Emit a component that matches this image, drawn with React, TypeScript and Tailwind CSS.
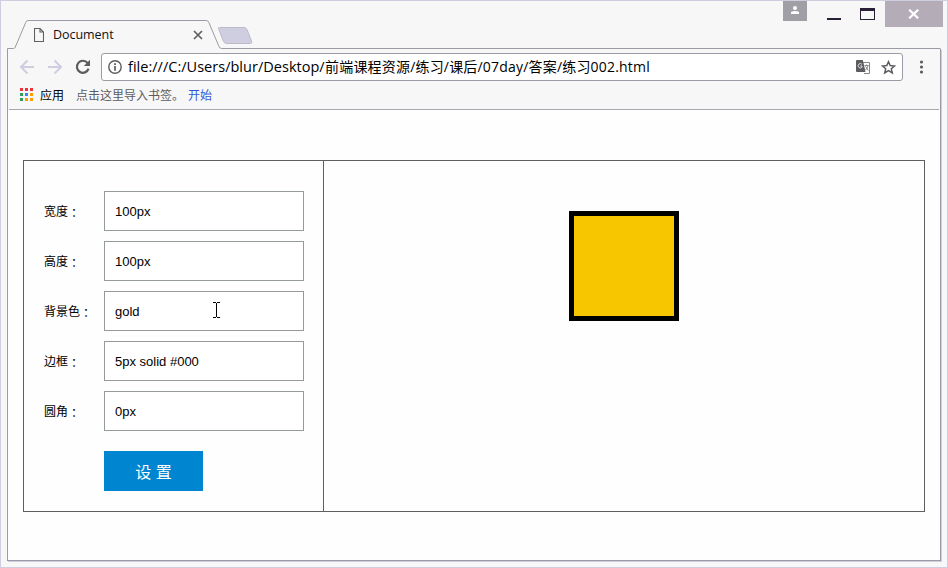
import React from 'react';

const ui = "font-['Open_Sans','Noto_Sans_CJK_SC',sans-serif]";

const fields = [
  { label: '宽度', value: '100px' },
  { label: '高度', value: '100px' },
  { label: '背景色', value: 'gold' },
  { label: '边框', value: '5px solid #000' },
  { label: '圆角', value: '0px' },
];

const appColors = [
  'bg-[#f0323c]', 'bg-[#f0323c]', 'bg-[#f0323c]',
  'bg-[#2f9e57]', 'bg-[#2e8cf0]', 'bg-[#ff9c00]',
  'bg-[#2f9e57]', 'bg-[#ff9c00]', 'bg-[#ff9c00]',
];

function TitleBar() {
  return (
    <div className="relative flex h-[49px] shrink-0">
      <svg className="absolute left-0 top-0" width="948" height="49" viewBox="0 0 948 49" fill="none">
        <path d="M218.500 28.500Q218 27.500 219.500 27.500H244Q246 27.500 247 29.500L251.500 41Q252.500 43.500 250.500 43.500H226.500Q224.500 43.500 223.500 41.500Z" fill="#cfcde0" stroke="#bdbbc8" />
        <path d="M7.500 49V48.500H13.500Q14.800 48.500 15.300 47L25.700 22.500Q26.500 20.500 28 20.500H206.500Q208 20.500 208.800 22.500L219 46.500Q219.800 48.500 221.500 48.500H940.500" stroke="#9c9ba3" />
      </svg>
      <div className="mt-[20px] flex h-[29px] w-[203px] items-center pl-[34px]">
        <svg className="shrink-0" width="10" height="14" viewBox="0 0 10 14" fill="none" stroke="#5f5f63" strokeWidth="1.100">
          <path d="M.5.5H6L9.500 4V13.500H.5ZM6 .5V4H9.500" />
        </svg>
        <span className="ml-[9px] mt-px text-[12.500px] leading-[18px] tracking-[-0.05px] text-[#111]">Document</span>
        <svg className="ml-auto shrink-0" width="10" height="10" viewBox="0 0 10 10" stroke="#5f5f63" strokeWidth="1.700">
          <path d="M1 1L9 9M9 1L1 9" />
        </svg>
      </div>
      <div className="ml-auto mr-[5px] flex h-[27px] items-start pt-px">
        <div className="flex h-5 w-6 justify-center bg-[#a09fa5] pt-[5px]">
          <svg width="8" height="8" viewBox="0 0 8 8" fill="#fff">
            <circle cx="4" cy="2" r="2" />
            <path d="M0 8V6.500Q0 5 4 5T8 6.500V8Z" />
          </svg>
        </div>
        <div className="ml-5 mt-[17px] h-[2px] w-[14px] bg-[#292036]" />
        <div className="ml-[19px] mt-[7px] h-3 w-[15px] border border-t-[3px] border-[#292036]" />
        <div className="ml-[10px] flex h-[26px] w-[58px] items-center justify-center bg-[#b4adb7]">
          <svg width="12" height="10" viewBox="0 0 12 10" stroke="#fff" strokeWidth="2.200">
            <path d="M1.200.7L10.200 9.300M10.200.7L1.200 9.300" />
          </svg>
        </div>
      </div>
    </div>
  );
}

function AddressBar() {
  return (
    <div className="flex h-[36px] items-center pl-[10px] pr-[12px]">
      <svg width="16" height="16" viewBox="0 0 16 16" fill="none" stroke="#cfcde0" strokeWidth="2">
        <path d="M15 8H2M8.500 1.500L2 8L8.500 14.500" />
      </svg>
      <svg className="ml-3" width="16" height="16" viewBox="0 0 16 16" fill="none" stroke="#cfcde0" strokeWidth="2">
        <path d="M1 8H14M7.500 1.500L14 8L7.500 14.500" />
      </svg>
      <svg className="ml-3" width="16" height="16" viewBox="0 0 16 16" fill="none">
        <path d="M12.600 4A6 6 0 1 0 13.600 9.700" stroke="#5c5c60" strokeWidth="2.200" />
        <path d="M15 .8V7H8.800Z" fill="#5c5c60" />
      </svg>
      <div className="ml-[10px] flex h-[28px] w-[802px] items-center rounded-[3px] border border-[#9c9ba3] bg-white pl-[6px] pr-[6px]">
        <svg className="shrink-0" width="14" height="14" viewBox="0 0 14 14" fill="none" stroke="#5c5c60">
          <circle cx="7" cy="7" r="6.200" strokeWidth="1.400" />
          <path d="M7 6V10.800M7 3.200V4.900" strokeWidth="1.700" />
        </svg>
        <div className="-mt-px ml-[6px] flex items-center whitespace-nowrap text-[14px] leading-[22px] text-black">
          <span className="w-[197px] text-[14.500px] tracking-[0.02px]">file:///C:/Users/blur/Desktop/</span>
          <span className="tracking-[0.19px]">前端课程资源/练习/课后/07day/答案/练习002.html</span>
        </div>
        <svg className="ml-auto shrink-0" width="14" height="14" viewBox="0 0 14 14" fill="none">
          <path d="M7 2.500H13.500V13.500H8" fill="#fff" stroke="#85858a" />
          <path d="M1 0H6.800L9.500 12H1Q0 12 0 11V1Q0 0 1 0Z" fill="#5c5c60" />
          <path d="M6 4.300A2.200 2.200 0 1 0 6 7.200V6H4.200" stroke="#ddd" />
          <path d="M8.500 5.500H12.500M10.500 4.500V5.500M12 5.500Q11.300 8.500 9.500 10M9.500 6.500L12.300 10.500" stroke="#85858a" />
        </svg>
        <svg className="ml-[11px] shrink-0" width="15" height="15" viewBox="0 0 15 15" fill="none" stroke="#5c5c60" strokeWidth="1.500">
          <path d="M7.500 1.700L9.200 5.600L13.500 6L10.300 8.800L11.300 13L7.500 10.700L3.700 13L4.700 8.800L1.500 6L5.800 5.600Z" />
        </svg>
      </div>
      <svg className="ml-auto" width="12" height="14" viewBox="0 0 12 14" fill="#5c5c60">
        <circle cx="6.500" cy="2" r="1.600" />
        <circle cx="6.500" cy="7" r="1.600" />
        <circle cx="6.500" cy="12" r="1.600" />
      </svg>
    </div>
  );
}

function BookmarksBar() {
  return (
    <div className="flex h-[24px] items-center pb-[2px] pl-[11px] text-[12px] leading-[18px]">
      <div className="-mt-[3px] grid grid-cols-3 gap-[2px]">
        {appColors.map((c, i) => (
          <span key={i} className={`size-[3px] ${c}`} />
        ))}
      </div>
      <span className="ml-[7px] text-black">应用</span>
      <span className="ml-[12px] text-[#5c5c60]">点击这里导入书签。</span>
      <span className="ml-[4px] text-[#3457d5]">开始</span>
    </div>
  );
}

function StyleForm() {
  return (
    <div className="w-[300px] border-r border-[#5f5f5f] pl-5 pt-[30px]">
      <div className="flex flex-col gap-[10px]">
        {fields.map((f) => (
          <label key={f.label} className="flex h-10 items-center">
            <span className="flex w-[60px] whitespace-nowrap font-['Noto_Sans_CJK_SC',sans-serif] text-[12px] text-black">
              {f.label}
              <span lang="zh-TW" className="-mb-[2px] mt-[2px] font-['Noto_Sans_CJK_TC',sans-serif]">：</span>
            </span>
            <input
              className="h-10 w-[200px] border border-[#959c95] bg-white px-[10px] font-['Liberation_Sans',Arial,sans-serif] text-[13px] text-black outline-none"
              defaultValue={f.value}
            />
          </label>
        ))}
      </div>
      <button className="ml-[60px] mt-5 h-10 w-[99px] bg-[#0085d0] pt-[3px] font-['Liberation_Sans','Noto_Sans_CJK_SC',sans-serif] text-[16px] text-white">
        设 置
      </button>
    </div>
  );
}

export default function App() {
  return (
    <div className={`relative flex h-[568px] w-[948px] flex-col overflow-hidden bg-[#f7f7f7] ${ui}`}>
      <TitleBar />
      <div className="mx-[7px] flex h-[512px] flex-col border-x border-b border-[#9c9ba3] shadow-[1px_1px_0_#cfcde0]">
        <div className="mx-px flex h-[61px] shrink-0 flex-col border-b border-[#aaa7b1]">
          <AddressBar />
          <BookmarksBar />
        </div>
        <div className="flex-1 bg-[#fefefe] pl-[15px] pt-[50px]">
          <div className="flex h-[352px] w-[902px] border border-[#5f5f5f]">
            <StyleForm />
            <div className="flex flex-1 justify-center pt-[50px]">
              <div className="size-[110px] border-[5px] border-black bg-[#f7c600]" />
            </div>
          </div>
        </div>
      </div>
      <div className="pointer-events-none absolute inset-0 border border-[#cfcde0]" />
      <svg className="pointer-events-none absolute left-[213px] top-[302px]" width="7" height="16" viewBox="0 0 7 16" fill="none" stroke="#000" shapeRendering="crispEdges">
        <path d="M0 .5H3M4 .5H7M3.500 1V15M0 15.500H3M4 15.500H7" />
      </svg>
    </div>
  );
}
